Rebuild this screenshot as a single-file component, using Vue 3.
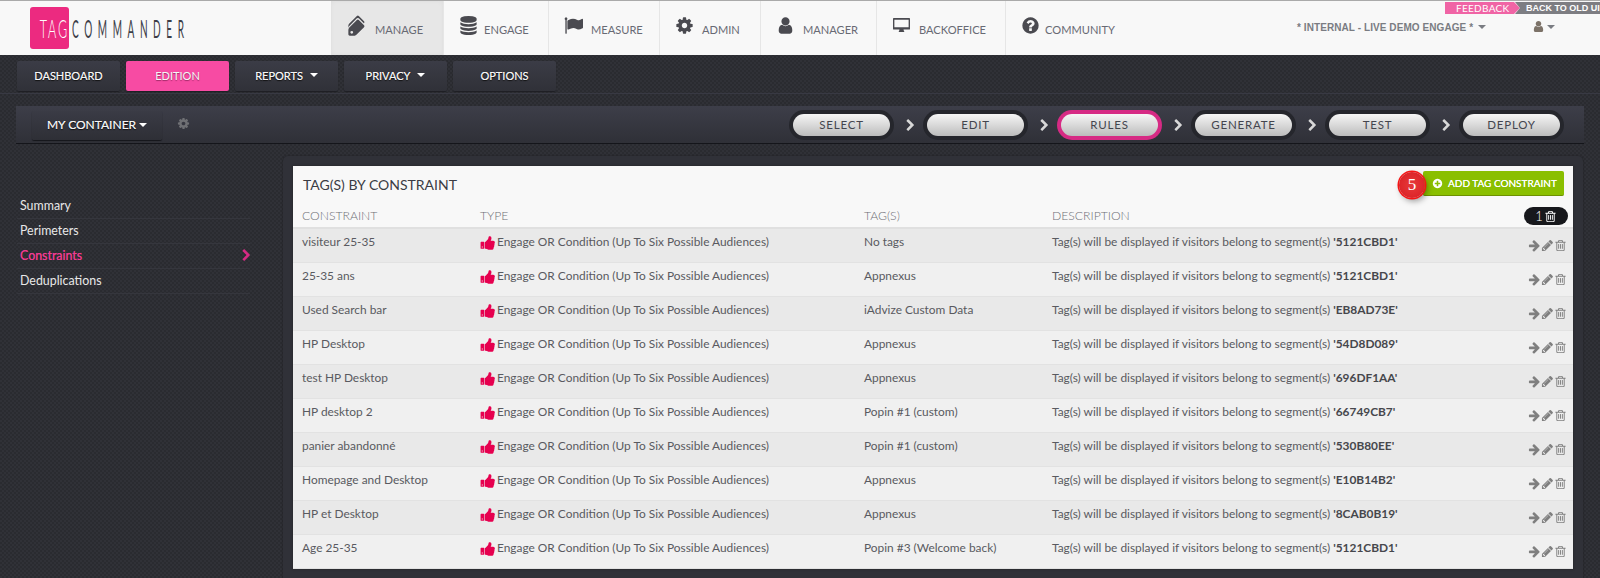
<script setup>
// -- Icons (1792 grid) --
const icons = {
  tags: "M448 448q0-53-37.500-90.500t-90.500-37.500-90.500 37.500-37.500 90.500 37.500 90.500 90.500 37.500 90.500-37.500 37.500-90.500zm1067 576q0 53-37 90l-491 492q-39 37-91 37-53 0-90-37l-715-716q-38-37-64.500-101t-26.500-117v-416q0-52 38-90t90-38h416q53 0 117 26.500t102 64.500l715 714q37 39 37 91zm384 0q0 53-37 90l-491 492q-39 37-91 37-36 0-59-14t-53-45l470-470q37-37 37-90 0-52-37-91l-715-714q-38-38-102-64.500t-117-26.500h224q53 0 117 26.500t102 64.500l715 714q37 39 37 91z",
  database: "M896 768q237 0 443-43t325-127v170q0 69-103 128t-280 93.500-385 34.500-385-34.500-280-93.500-103-128v-170q119 84 325 127t443 43zm0 768q237 0 443-43t325-127v170q0 69-103 128t-280 93.500-385 34.500-385-34.500-280-93.500-103-128v-170q119 84 325 127t443 43zm0-384q237 0 443-43t325-127v170q0 69-103 128t-280 93.500-385 34.500-385-34.500-280-93.500-103-128v-170q119 84 325 127t443 43zm0-1152q208 0 385 34.500t280 93.500 103 128v128q0 69-103 128t-280 93.500-385 34.500-385-34.500-280-93.500-103-128v-128q0-69 103-128t280-93.500 385-34.500z",
  flag: "M320 256q0 72-64 110v1266q0 13-9.500 22.500t-22.500 9.500h-64q-13 0-22.500-9.500t-9.500-22.500v-1266q-64-38-64-110 0-53 37.500-90.500t90.500-37.500 90.500 37.500 37.500 90.500zm1472 64v763q0 25-12.500 38.500t-39.500 27.500q-215 116-369 116-61 0-123.500-22t-108.500-48-115.500-48-142.500-22q-192 0-464 146-17 9-33 9-26 0-45-19t-19-45v-742q0-32 31-55 21-14 79-43 236-120 421-120 107 0 200 29t219 88q38 19 88 19 54 0 117.500-21t110-47 88-47 54.500-21q26 0 45 19t19 45z",
  cog: "M1152 896q0-106-75-181t-181-75-181 75-75 181 75 181 181 75 181-75 75-181zm512-109v222q0 12-8 23t-20 13l-185 28q-19 54-39 91 35 50 107 138 10 12 10 25t-9 23q-27 37-99 108t-94 71q-12 0-26-9l-138-108q-44 23-91 38-16 136-29 186-7 28-36 28h-222q-14 0-24.500-8.500t-11.500-21.500l-28-184q-49-16-90-37l-141 107q-10 9-25 9-14 0-25-11-126-114-165-168-7-10-7-23 0-12 8-23 15-21 51-66.500t54-70.500q-27-50-41-99l-183-27q-13-2-21-12.500t-8-23.500v-222q0-12 8-23t19-13l186-28q14-46 39-92-40-57-107-138-10-12-10-24 0-10 9-23 26-36 98.500-107.500t94.500-71.500q13 0 26 10l138 107q44-23 91-38 16-136 29-186 7-28 36-28h222q14 0 24.500 8.500t11.500 21.500l28 184q49 16 90 37l142-107q9-9 24-9 13 0 25 10 129 119 165 170 7 8 7 22 0 12-8 23-15 21-51 66.500t-54 70.500q26 50 41 98l183 28q13 2 21 12.500t8 23.500z",
  user: "M1536 1399q0 109-62.500 187t-150.500 78h-854q-88 0-150.500-78t-62.500-187q0-85 8.500-160.500t31.500-152 58.500-131 94-89 134.500-34.500q131 128 313 128t313-128q76 0 134.500 34.500t94 89 58.500 131 31.500 152 8.500 160.500zm-256-887q0 159-112.500 271.500t-271.500 112.500-271.500-112.500-112.500-271.500 112.500-271.500 271.500-112.500 271.500 112.500 112.500 271.500z",
  desktop: "M160 192h1472q64 0 64 64v960q0 64-64 64h-544q0 96 64 160v64h-512v-64q64-64 64-160h-544q-64 0-64-64v-960q0-64 64-64zm64 160v704h1344v-704z",
  question: "M1024 1376v-192q0-14-9-23t-23-9h-192q-14 0-23 9t-9 23v192q0 14 9 23t23 9h192q14 0 23-9t9-23zm256-672q0-88-55.500-163t-138.500-116-170-41q-243 0-371 213-15 24 8 42l132 100q7 6 19 6 16 0 25-12 53-68 86-92 34-24 86-24 48 0 85.500 26t37.500 59q0 38-20 61t-68 45q-63 28-115.500 86.500t-52.500 125.500v36q0 14 9 23t23 9h192q14 0 23-9t9-23q0-19 21.500-49.500t54.500-49.500q32-18 49-28.500t46-35 44.500-48 28-60.500 12.500-81zm384 192q0 209-103 385.500t-279.500 279.500-385.500 103-385.500-103-279.500-279.500-103-385.500 103-385.500 279.500-279.500 385.500-103 385.500 103 279.500 279.500 103 385.500z",
  chevron: "M1363 877l-742 742q-19 19-45 19t-45-19l-166-166q-19-19-19-45t19-45l531-531-531-531q-19-19-19-45t19-45l166-166q19-19 45-19t45 19l742 742q19 19 19 45t-19 45z",
  arrow: "M1600 960q0 54-37 91l-651 651q-39 37-91 37-51 0-90-37l-75-75q-38-38-38-91t38-91l293-293h-704q-52 0-84.500-37.500t-32.500-90.500v-128q0-53 32.500-90.500t84.500-37.500h704l-293-294q-38-36-38-90t38-90l75-75q38-38 90-38 53 0 91 38l651 651q37 35 37 90z",
  pencil: "M491 1536l91-91-235-235-91 91v107h128v128h107zm523-928q0-22-22-22-10 0-17 7l-542 542q-7 7-7 17 0 22 22 22 10 0 17-7l542-542q7-7 7-17zm-54-192l416 416-832 832h-416v-416zm683 96q0 53-37 90l-166 166-416-416 166-165q36-38 90-38 53 0 91 38l235 234q37 39 37 91z",
  trash: "M704 736v576q0 14-9 23t-23 9h-64q-14 0-23-9t-9-23v-576q0-14 9-23t23-9h64q14 0 23 9t9 23zm256 0v576q0 14-9 23t-23 9h-64q-14 0-23-9t-9-23v-576q0-14 9-23t23-9h64q14 0 23 9t9 23zm256 0v576q0 14-9 23t-23 9h-64q-14 0-23-9t-9-23v-576q0-14 9-23t23-9h64q14 0 23 9t9 23zm128 724v-948h-896v948q0 22 7 40.500t14.500 27 10.500 8.500h832q3 0 10.500-8.500t14.500-27 7-40.500zm-672-1076h448l-48-117q-7-9-17-11h-317q-10 2-17 11zm928 32v64q0 14-9 23t-23 9h-96v948q0 83-47 143.500t-113 60.500h-832q-66 0-113-58.500t-47-141.500v-952h-96q-14 0-23-9t-9-23v-64q0-14 9-23t23-9h309l70-167q15-37 54-63t79-26h320q40 0 79 26t54 63l70 167h309q14 0 23 9t9 23z",
  plus: "M1344 960v-128q0-26-19-45t-45-19h-256v-256q0-26-19-45t-45-19h-128q-26 0-45 19t-19 45v256h-256q-26 0-45 19t-19 45v128q0 26 19 45t45 19h256v256q0 26 19 45t45 19h128q26 0 45-19t19-45v-256h256q26 0 45-19t19-45zm320-64q0 209-103 385.500t-279.500 279.500-385.500 103-385.500-103-279.500-279.500-103-385.500 103-385.500 279.500-279.500 385.500-103 385.500 103 279.500 279.500 103 385.500z",
  thumb: "M320 1344q0-26-19-45t-45-19q-27 0-45.500 19t-18.500 45q0 27 18.500 45.500t45.500 18.500q26 0 45-18.500t19-45.500zm160-512v640q0 26-19 45t-45 19h-288q-26 0-45-19t-19-45v-640q0-26 19-45t45-19h288q26 0 45 19t19 45zm1184 0q0 86-55 149 15 44 15 76 3 76-43 137 17 56 0 117-15 57-54 94 9 112-49 181-64 76-197 78h-129q-66 0-144-15.500t-121.500-29-120.500-39.500q-123-43-158-44-26-1-45-19.500t-19-44.500v-641q0-25 18-43.500t43-20.500q24-2 76-59t101-121q68-87 101-120 18-18 31-48t17.500-48.500 13.500-60.500q7-39 12.500-61t19.500-52 34-50q19-19 45-19 46 0 82.500 10.500t60 26 40 40.500 24 45 12 50 5 45 .5 39q0 38-9.500 76t-19 60-27.500 56q-3 6-10 18t-11 22-8 24h277q78 0 135 57t57 135z",
};

// -- Data --
const navItems = [
  { label: "MANAGE", icon: "tags", width: 113, active: true },
  { label: "ENGAGE", icon: "database", width: 105 },
  { label: "MEASURE", icon: "flag", width: 111 },
  { label: "ADMIN", icon: "cog", width: 101 },
  { label: "MANAGER", icon: "user", width: 116 },
  { label: "BACKOFFICE", icon: "desktop", width: 129 },
  { label: "COMMUNITY", icon: "question", width: 130 },
];
const subTabs = [
  { label: "DASHBOARD" },
  { label: "EDITION", active: true },
  { label: "REPORTS", caret: true },
  { label: "PRIVACY", caret: true },
  { label: "OPTIONS" },
];
const steps = ["SELECT", "EDIT", "RULES", "GENERATE", "TEST", "DEPLOY"];
const sideLinks = ["Summary", "Perimeters", "Constraints", "Deduplications"];
const rows = [
  { name: "visiteur 25-35", tags: "No tags", seg: "5121CBD1" },
  { name: "25-35 ans", tags: "Appnexus", seg: "5121CBD1" },
  { name: "Used Search bar", tags: "iAdvize Custom Data", seg: "EB8AD73E" },
  { name: "HP Desktop", tags: "Appnexus", seg: "54D8D089" },
  { name: "test HP Desktop", tags: "Appnexus", seg: "696DF1AA" },
  { name: "HP desktop 2", tags: "Popin #1 (custom)", seg: "66749CB7" },
  { name: "panier abandonné", tags: "Popin #1 (custom)", seg: "530B80EE" },
  { name: "Homepage and Desktop", tags: "Appnexus", seg: "E10B14B2" },
  { name: "HP et Desktop", tags: "Appnexus", seg: "8CAB0B19" },
  { name: "Age 25-35", tags: "Popin #3 (Welcome back)", seg: "5121CBD1" },
];
</script>

<template>
  <div class="page">
    <header class="topbar">
      <div class="logo">
        <span class="logo-mark"><span>TAG</span></span>
        <span class="logo-word"><span>COMMANDER</span></span>
      </div>
      <nav class="mainnav">
        <a
          v-for="item in navItems"
          :key="item.label"
          class="navitem"
          :class="{ active: item.active }"
          :style="{ width: item.width + 'px' }"
        >
          <svg class="navicon" :class="'ic-' + item.icon" :viewBox="item.icon === 'tags' ? '0 0 1920 1792' : '0 0 1792 1792'"><path :d="icons[item.icon]" /></svg>
          <span>{{ item.label }}</span>
        </a>
      </nav>
      <div class="topright">
        <span class="account">* INTERNAL - LIVE DEMO ENGAGE *</span>
        <i class="caret grey"></i>
        <svg class="usericon" viewBox="0 0 1792 1792"><path :d="icons.user" /></svg>
        <i class="caret grey"></i>
      </div>
      <div class="ribbon">
        <span class="feedback">FEEDBACK</span>
        <span class="oldui">BACK TO OLD UI</span>
      </div>
    </header>

    <div class="subnav">
      <a v-for="tab in subTabs" :key="tab.label" class="subtab" :class="{ active: tab.active }">
        {{ tab.label }}<i v-if="tab.caret" class="caret white"></i>
      </a>
    </div>

    <div class="toolbar">
      <button class="container-btn">MY CONTAINER<i class="caret white tight"></i></button>
      <svg class="gear" viewBox="0 0 1792 1792"><path :d="icons.cog" /></svg>
      <div class="steps">
        <template v-for="(step, i) in steps" :key="step">
          <svg v-if="i > 0" class="step-arrow" viewBox="0 0 1792 1792"><path :d="icons.chevron" /></svg>
          <div class="pill-ring" :class="{ current: step === 'RULES' }">
            <span class="pill">{{ step }}</span>
          </div>
        </template>
      </div>
    </div>

    <div class="content">
      <aside class="sidebar">
        <a v-for="link in sideLinks" :key="link" class="sidelink" :class="{ on: link === 'Constraints' }">
          {{ link }}
          <svg v-if="link === 'Constraints'" class="side-chevron" viewBox="0 0 1792 1792"><path :d="icons.chevron" /></svg>
        </a>
      </aside>
      <section class="panel">
        <div class="card">
          <div class="card-head">
            <h2>TAG(S) BY CONSTRAINT</h2>
            <div class="add-wrap">
              <span class="badge">5</span>
              <button class="add-btn">
                <svg viewBox="0 0 1792 1792"><path :d="icons.plus" /></svg>
                ADD TAG CONSTRAINT
              </button>
            </div>
          </div>
          <div class="row headrow">
            <span>CONSTRAINT</span>
            <span>TYPE</span>
            <span>TAG(S)</span>
            <span>DESCRIPTION</span>
            <span class="bulk">1<svg viewBox="0 0 1792 1792"><path :d="icons.trash" /></svg></span>
          </div>
          <div v-for="row in rows" :key="row.name" class="row datarow">
            <span>{{ row.name }}</span>
            <span class="type">
              <svg class="thumb" viewBox="0 0 1792 1792"><path :d="icons.thumb" /></svg>
              Engage OR Condition (Up To Six Possible Audiences)
            </span>
            <span>{{ row.tags }}</span>
            <span>Tag(s) will be displayed if visitors belong to segment(s) <b>'{{ row.seg }}'</b></span>
            <span class="actions">
              <svg viewBox="0 0 1792 1792"><path :d="icons.arrow" /></svg>
              <svg viewBox="0 0 1792 1792"><path :d="icons.pencil" /></svg>
              <svg viewBox="0 0 1792 1792"><path :d="icons.trash" /></svg>
            </span>
          </div>
        </div>
      </section>
    </div>
  </div>
</template>

<style>
html, body {
  margin: 0;
  background: #2c2d33;
}
</style>

<style scoped>
.page {
  height: 578px;
  overflow: hidden;
  font-family: Lato, "Open Sans", sans-serif;
  background-color: #2c2d33;
  background-image: repeating-conic-gradient(#2a2b30 0 25%, #303137 0 50%);
  background-size: 4px 4px;
}

/* -- Top bar -- */
.topbar {
  position: relative;
  height: 54px;
  display: flex;
  background: #f8f8f8;
  border-top: 1px solid #aaa;
}
.logo {
  width: 331px;
  flex: none;
  display: flex;
  align-items: flex-start;
  padding: 6px 0 0 30px;
  box-sizing: border-box;
}
.logo-mark {
  flex: none;
  width: 39px;
  height: 42px;
  background: #ec2a80;
  border-radius: 3px;
  color: #fff;
  display: flex;
  align-items: center;
  justify-content: center;
  font-weight: 300;
}
.logo-mark span {
  display: block;
  flex: none;
  width: 39px;
  text-align: center;
  white-space: nowrap;
  font-size: 25px;
  transform: scaleX(0.5);
  letter-spacing: 4px;
}
.logo-word {
  flex: none;
  width: 116px;
  height: 42px;
  display: flex;
  align-items: center;
  margin-left: 3px;
  color: #3c3d47;
  font-size: 25px;
  font-weight: 400;
}
.logo-word span {
  display: block;
  flex: none;
  transform: scaleX(0.4);
  transform-origin: left center;
  letter-spacing: 14px;
  white-space: nowrap;
}
.mainnav {
  display: flex;
  flex: none;
}
.navitem {
  display: flex;
  align-items: center;
  box-sizing: border-box;
  border-right: 1px solid #e6e6e6;
  padding-left: 15px;
  font-size: 11.1px;
  color: #686a74;
}
.navitem:last-child {
  border-right: none;
}
.navitem.active {
  background: #e7e7e7;
  box-shadow: inset 0 0 4px #ddd;
}
.navitem span {
  padding-top: 3px;
}
.navicon {
  width: 19px;
  height: 19px;
  fill: #4a4a50;
  margin-right: 8px;
  margin-top: -5px;
  flex: none;
}
.ic-tags {
  transform: rotate(-90deg);
  width: 21px;
}
.ic-database {
  margin-right: 6px;
}
.ic-question {
  margin-right: 5px;
}
.topright {
  flex: 1;
  display: flex;
  align-items: center;
  padding: 0 0 0 161px;
  margin-top: -2px;
  color: #7a7c82;
  font-family: "Liberation Sans", Arial, sans-serif;
  font-size: 10px;
  font-weight: 700;
}
.account {
  letter-spacing: 0.08px;
  margin-right: 5px;
}
.usericon {
  width: 13px;
  height: 13px;
  fill: #7c7268;
  margin: -2px 2px 0 46px;
}
.ribbon {
  position: absolute;
  top: 1px;
  right: 0;
  display: flex;
  height: 12px;
  font-size: 10px;
  line-height: 12px;
  z-index: 2;
}
.feedback {
  width: 75px;
  padding-left: 11px;
  box-sizing: border-box;
  background: #f064a5;
  color: #fff;
  letter-spacing: 0.3px;
  clip-path: polygon(0 0, 92% 0, 100% 50%, 92% 100%, 0 100%);
}
.oldui {
  width: 85px;
  margin-left: -5px;
  padding-left: 11px;
  box-sizing: border-box;
  background: #7d7d82;
  color: #fff;
  font-family: "Liberation Sans", Arial, sans-serif;
  font-weight: 700;
  font-size: 9px;
  white-space: nowrap;
  clip-path: polygon(0 0, 100% 0, 100% 100%, 0 100%, 5px 50%);
}

/* -- Carets -- */
.caret {
  display: inline-block;
  width: 0;
  height: 0;
  border-left: 4px solid transparent;
  border-right: 4px solid transparent;
  border-top: 4px solid #7a7c82;
}
.caret.white {
  border-top-color: #fff;
  margin-left: 7px;
  vertical-align: 2px;
}
.caret.white.tight {
  margin-left: 3px;
}

/* -- Sub navigation -- */
.subnav {
  height: 39px;
  box-sizing: border-box;
  padding: 6px 0 0 17px;
  display: flex;
  gap: 6px;
  border-bottom: 1px solid #383943;
}
.subtab {
  width: 103px;
  height: 30px;
  box-sizing: border-box;
  padding-bottom: 2px;
  display: flex;
  align-items: center;
  justify-content: center;
  background: linear-gradient(#3b3c46, #303138);
  border-radius: 2px;
  color: #f6f6f6;
  font-size: 11px;
  text-shadow: 0 1px 1px #111, 0 0 0.4px #fff;
  box-shadow: 0 1px 1px #1e1f24;
}
.subtab.active {
  background: #f74ba3;
  text-shadow: 0 1px 1px #a02a68;
}

/* -- Toolbar -- */
.toolbar {
  height: 38px;
  box-sizing: border-box;
  margin: 12px 16px 0;
  background: linear-gradient(#3d3e49, #2f3037);
  border-bottom: 1px solid #14151a;
  display: flex;
  align-items: flex-start;
  padding: 4px 20px 0 16px;
}
.container-btn {
  width: 130px;
  height: 29px;
  margin-top: 1px;
  border: none;
  border-radius: 2px;
  background: linear-gradient(#3a3b45, #2e2f36);
  box-shadow: 0 1px 1px #15161a;
  color: #f6f6f6;
  font-family: inherit;
  font-size: 12px;
  text-shadow: 0 1px 1px #111, 0 0 0.4px #fff;
  padding: 0 0 2px;
}
.gear {
  width: 13px;
  height: 13px;
  fill: #6f7074;
  margin: 7px 0 0 15px;
}
.steps {
  margin-left: auto;
  display: flex;
  align-items: center;
}
.pill-ring {
  width: 105px;
  height: 30px;
  box-sizing: border-box;
  padding: 4px;
  border-radius: 15px;
  background: #25262c;
}
.pill-ring.current {
  background: #d62a84;
}
.pill {
  display: flex;
  align-items: center;
  justify-content: center;
  height: 22px;
  box-sizing: border-box;
  padding-bottom: 1px;
  border-radius: 11px;
  background: linear-gradient(#f6f6f6, #bcbcbc);
  color: #44454e;
  font-size: 11.5px;
  letter-spacing: 0.8px;
}
.step-arrow {
  width: 13px;
  height: 13px;
  margin: 1px 6px 0 10px;
  fill: #d8d8d8;
}

/* -- Content -- */
.content {
  display: flex;
  margin-top: 12px;
}
.sidebar {
  width: 283px;
  flex: none;
  box-sizing: border-box;
  padding: 38px 33px 0 17px;
}
.sidelink {
  display: flex;
  align-items: center;
  justify-content: space-between;
  height: 25px;
  box-sizing: border-box;
  padding: 0 0 1px 3px;
  border-bottom: 1px solid #35363d;
  color: #e8e8e8;
  font-size: 12.4px;
}
.sidelink.on {
  color: #ee3b8f;
  text-shadow: 0 0 0.6px #ee3b8f;
}
.side-chevron {
  width: 13px;
  height: 13px;
  fill: #d62a84;
  margin-right: -3px;
}
.panel {
  width: 1300px;
  box-sizing: border-box;
  padding: 10px;
  background: #303138;
  border-radius: 5px 5px 0 0;
  box-shadow: 0 0 2px #1c1d21;
}
.card {
  background: #f8f8f8;
  height: 403px;
  box-shadow: 0 0 2px #222;
}
.card-head {
  height: 40px;
  display: flex;
  justify-content: space-between;
  padding: 0 9px 0 10px;
}
.card-head h2 {
  margin: 10px 0 0;
  font-size: 14px;
  font-weight: 400;
  color: #3b3c44;
}
.add-wrap {
  position: relative;
  margin-top: 5px;
}
.add-btn {
  width: 141px;
  height: 25px;
  display: flex;
  align-items: center;
  padding: 0 0 0 9px;
  border: none;
  border-bottom: 1px solid #6d9000;
  border-radius: 2px;
  background: #8abf00;
  color: #fff;
  font-family: inherit;
  font-size: 10px;
  text-shadow: 0 0 0.4px #fff;
  white-space: nowrap;
}
.add-btn svg {
  width: 11px;
  height: 11px;
  fill: #fff;
  margin-right: 5px;
}
.badge {
  position: absolute;
  left: -24px;
  top: 1px;
  width: 26px;
  height: 26px;
  border-radius: 50%;
  background: radial-gradient(#e73a3a, #d81c22);
  box-shadow: 0 0 0 1.5px #f51515, 2px 3px 6px rgba(0, 0, 0, 0.4);
  color: #fff;
  font-family: "Liberation Serif", serif;
  font-size: 17px;
  line-height: 26px;
  text-align: center;
  z-index: 1;
}
.row {
  display: grid;
  grid-template-columns: 178px 384px 188px 1fr auto;
  padding-left: 9px;
}
.headrow {
  height: 23px;
  align-items: center;
  border-bottom: 2px solid #e0e0e0;
  box-sizing: border-box;
  padding-right: 5px;
  padding-bottom: 7px;
  color: #6e6f76;
  font-size: 12.2px;
  font-weight: 300;
}
.bulk {
  display: flex;
  align-items: center;
  justify-content: center;
  gap: 1px;
  width: 44px;
  height: 18px;
  margin-top: 1px;
  border-radius: 9px;
  background: #17181c;
  color: #fff;
  font-size: 13px;
}
.bulk svg {
  width: 13px;
  height: 13px;
  fill: #fff;
}
.datarow {
  height: 34px;
  box-sizing: border-box;
  padding-top: 5px;
  padding-right: 6px;
  border-bottom: 1px solid #e2e2e2;
  background: #f0f0f0;
  color: #595a60;
  font-size: 11.9px;
  line-height: 16px;
}
.datarow:nth-child(odd) {
  background: #e9e9e9;
}
.datarow b {
  font-weight: 700;
  color: #46474c;
}
.type {
  position: relative;
  padding-left: 17px;
}
.thumb {
  position: absolute;
  left: 0;
  top: 1px;
  width: 16px;
  height: 16px;
  fill: #e6004f;
}
.actions {
  display: flex;
  align-items: center;
  height: 20px;
  padding-top: 3px;
  box-sizing: border-box;
}
.actions svg {
  width: 13px;
  height: 13px;
  fill: #7f7f7f;
}
</style>
